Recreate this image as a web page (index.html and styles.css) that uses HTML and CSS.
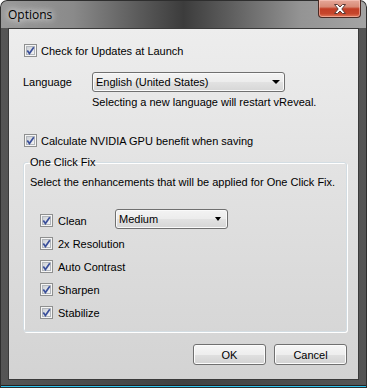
FILE: index.html
```html
<!DOCTYPE html>
<html lang="en">
<head>
    <meta charset="UTF-8">
    <title>Options</title>
    <link rel="stylesheet" href="styles.css">
</head>
<body>
    <svg class="defs" width="0" height="0">
        <defs>
            <linearGradient id="chk-fill" x1="0" y1="0" x2="1" y2="1">
                <stop offset="0" stop-color="#c9cdd3"/>
                <stop offset="1" stop-color="#f7f7f7"/>
            </linearGradient>
            <symbol id="chk" viewBox="0 0 13 13">
                <rect x="0.5" y="0.5" width="12" height="12" fill="#f5f5f5" stroke="#8e8f8f"/>
                <rect x="2.5" y="2.5" width="8" height="8" fill="url(#chk-fill)" stroke="#b2b6bb"/>
                <path d="M3.3 6.6 L5.4 9.6 L9.8 3.2" fill="none" stroke="#3a4f9a" stroke-width="1.7"/>
            </symbol>
        </defs>
    </svg>

    <div class="window">
        <div class="titlebar">
            <span class="title">Options</span>
            <span class="close">
                <svg width="14" height="10" viewBox="0 0 14 10">
                    <path d="M1.5 0.5 H4.5 L7 3 L9.5 0.5 H12.5 L8.8 5 L12.5 9.5 H9.5 L7 7 L4.5 9.5 H1.5 L5.2 5 Z" fill="#fff" stroke="#5a3a35"/>
                </svg>
            </span>
        </div>

        <div class="client">
            <div class="check-row first">
                <svg class="chk"><use href="#chk"/></svg>
                <span>Check for Updates at Launch</span>
            </div>

            <div class="lang-row">
                <span class="lang-label">Language</span>
                <div class="combo combo-lang">
                    <span>English (United States)</span>
                    <span class="arrow"></span>
                </div>
            </div>
            <div class="hint">Selecting a new language will restart vReveal.</div>

            <div class="check-row gpu">
                <svg class="chk"><use href="#chk"/></svg>
                <span>Calculate NVIDIA GPU benefit when saving</span>
            </div>

            <fieldset class="group">
                <legend>One Click Fix</legend>
                <div class="group-desc">Select the enhancements that will be applied for One Click Fix.</div>
                <div class="fix-list">
                    <div class="fix-row">
                        <svg class="chk"><use href="#chk"/></svg>
                        <span class="fix-label clean">Clean</span>
                        <div class="combo combo-clean">
                            <span>Medium</span>
                            <span class="arrow small"></span>
                        </div>
                    </div>
                    <div class="fix-row">
                        <svg class="chk"><use href="#chk"/></svg>
                        <span class="fix-label">2x Resolution</span>
                    </div>
                    <div class="fix-row">
                        <svg class="chk"><use href="#chk"/></svg>
                        <span class="fix-label">Auto Contrast</span>
                    </div>
                    <div class="fix-row">
                        <svg class="chk"><use href="#chk"/></svg>
                        <span class="fix-label">Sharpen</span>
                    </div>
                    <div class="fix-row">
                        <svg class="chk"><use href="#chk"/></svg>
                        <span class="fix-label">Stabilize</span>
                    </div>
                </div>
            </fieldset>

            <div class="buttons">
                <button class="btn">OK</button>
                <button class="btn">Cancel</button>
            </div>
        </div>
    </div>
</body>
</html>
```

FILE: styles.css
```css
body {
    margin: 0;
    background: #fff;
    font-family: "Liberation Sans", Arial, sans-serif;
    font-size: 11px;
    color: #000;
}
.defs {
    position: absolute;
}
.window {
    box-sizing: border-box;
    width: 367px;
    height: 388px;
    padding: 0 8px 8px;
    border-radius: 7px 7px 0 0;
    background:
        linear-gradient(90deg, #9a9a9a 0%, #8a8a8a 20%, #5a5a5a 38%, #3c3c3c 50%, #5c5c5c 62%, #949494 82%, #a4a4a4 100%) top / 100% 28px no-repeat,
        linear-gradient(90deg, #555 0%, #404040 50%, #555 100%);
    box-shadow: inset 0 0 0 1px #2e2e2e, inset 0 -2px 0 #32c4ef, inset 0 -3px 0 #222;
}
.titlebar {
    height: 28px;
    display: flex;
    justify-content: space-between;
    align-items: flex-start;
    margin: 0 -2px 0 0;
}
.title {
    margin-top: 7px;
    font-family: "Open Sans", "Noto Sans", sans-serif;
    font-size: 12px;
    line-height: 15px;
    text-shadow: 0 0 6px #fff, 0 0 10px rgba(255, 255, 255, 0.8);
}
.close {
    box-sizing: border-box;
    width: 43px;
    height: 18px;
    display: flex;
    justify-content: center;
    align-items: center;
    border: 1px solid #4a2a24;
    border-top: none;
    border-radius: 0 0 4px 4px;
    background: linear-gradient(#e6a899 0%, #d88a76 40%, #c23e25 52%, #c6462c 80%, #e27a5a 100%);
    box-shadow: inset 0 0 0 1px rgba(255, 210, 200, 0.5);
}
.client {
    box-sizing: border-box;
    height: 352px;
    padding: 0 11px 0 14px;
    border: 1px solid #3a3a3a;
    background: linear-gradient(#ededed, #d3d3d3);
}
.chk {
    width: 13px;
    height: 13px;
    flex: none;
}
.check-row {
    display: flex;
    align-items: center;
    height: 13px;
    padding-left: 1px;
    gap: 4px;
}
.check-row.first {
    margin-top: 15px;
}
.check-row.gpu {
    margin-top: 25px;
}
.lang-row {
    display: flex;
    align-items: center;
    margin-top: 15px;
}
.lang-label {
    width: 69px;
}
.combo {
    box-sizing: border-box;
    height: 20px;
    display: flex;
    align-items: center;
    justify-content: space-between;
    padding: 0 4px 0 3px;
    border: 1px solid #707070;
    border-radius: 3px;
    background: linear-gradient(#f3f3f3 0%, #ececec 50%, #e2e2e2 51%, #d6d6d6 100%);
    box-shadow: inset 0 0 0 1px #fafafa;
}
.combo-lang {
    width: 193px;
}
.combo-clean {
    width: 113px;
    padding-right: 6px;
    margin-top: -4px;
}
.arrow {
    width: 0;
    height: 0;
    border-left: 4px solid transparent;
    border-right: 4px solid transparent;
    border-top: 4px solid #000;
}
.arrow.small {
    border-left-width: 3.5px;
    border-right-width: 3.5px;
}
.hint {
    margin-top: 3px;
    padding-left: 69px;
    line-height: 14px;
}
.group {
    box-sizing: border-box;
    width: 324px;
    margin: 9px 0 0;
    padding: 0 0 7px;
    border: 1px solid #d3dde3;
    border-radius: 3px;
    box-shadow: inset 1px 1px 0 #fff, 1px 1px 0 #fff;
}
.group legend {
    margin-left: 4px;
    padding: 0 2px;
    line-height: 13px;
}
.group-desc {
    margin-top: 6px;
    padding-left: 6px;
    line-height: 14px;
}
.fix-list {
    margin-top: 20px;
    padding-left: 16px;
}
.fix-row {
    display: flex;
    align-items: center;
    height: 23px;
}
.fix-label {
    margin-left: 5px;
}
.fix-label.clean {
    width: 57px;
}
.buttons {
    display: flex;
    justify-content: flex-end;
    gap: 8px;
    margin-top: 12px;
}
.btn {
    box-sizing: border-box;
    width: 73px;
    height: 21px;
    padding: 0;
    border: 1px solid #707070;
    border-radius: 3px;
    background: linear-gradient(#f6f6f6 0%, #eeeeee 50%, #e0e0e0 51%, #d2d2d2 100%);
    box-shadow: inset 0 0 0 1px #fcfcfc;
    font-family: "Liberation Sans", Arial, sans-serif;
    font-size: 11px;
    color: #000;
}
```
